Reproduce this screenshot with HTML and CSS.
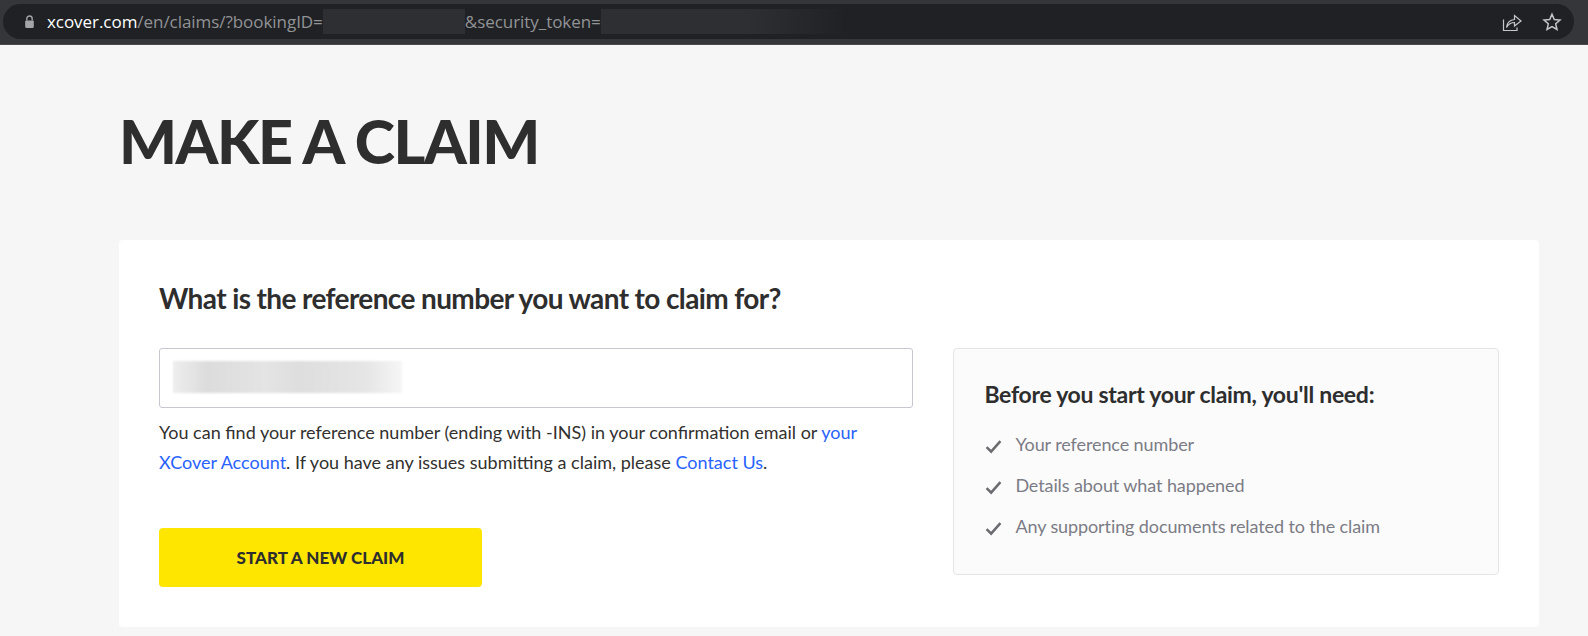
FILE: index.html
```html
<!DOCTYPE html>
<html lang="en">
<head>
    <meta charset="UTF-8">
    <title>Make a claim</title>
    <link rel="stylesheet" href="styles.css">
</head>
<body>
    <div class="toolbar">
        <div class="address-bar">
            <svg class="lock" width="11" height="14" viewBox="0 0 10 13"><path d="M2.500 5V3.400a2.500 2.500 0 0 1 5 0V5" fill="none" stroke="#a3a5a8" stroke-width="1.300"/><rect x="1" y="5" width="8" height="7" rx="1" fill="#a3a5a8"/></svg>
            <div class="url">
                <span class="host">xcover.com</span>/en/claims/?bookingID=<span class="redacted redacted-id"></span>&amp;security_token=<span class="redacted redacted-token"></span>
            </div>
            <div class="bar-icons">
                <svg width="20" height="20" viewBox="0 0 20 20" fill="none" stroke="#c4c6c9" stroke-width="1.200"><path d="M1.500 7.500V18.500H15V15.500"/><path d="M4.500 15.500C5 10.500 8 8 12.500 7.500V3.500L19 9L12.500 14V10.500C9.500 10.500 6.500 12 4.500 15.500Z"/></svg>
                <svg width="20" height="20" viewBox="0 0 20 20" fill="none" stroke="#c4c6c9" stroke-width="1.500"><path d="M10 2.200L12.300 7.500L18 8L13.700 11.800L15 17.500L10 14.500L5 17.500L6.300 11.800L2 8L7.700 7.500Z"/></svg>
            </div>
        </div>
    </div>

    <div class="page">
        <h1>MAKE A CLAIM</h1>

        <div class="card">
            <h2>What is the reference number you want to claim for?</h2>
            <div class="columns">
                <div class="form-col">
                    <div class="ref-input"><span class="ref-value"></span></div>
                    <p class="hint">You can find your reference number (ending with -INS) in your confirmation email or <a href="#">your</a> <a href="#">XCover Account</a>. If you have any issues submitting a claim, please <a href="#">Contact Us</a>.</p>
                    <button class="start-btn">START A NEW CLAIM</button>
                </div>
                <div class="needs">
                    <h3>Before you start your claim, you'll need:</h3>
                    <ul>
                        <li><svg class="check" width="17" height="15" viewBox="0 0 16 14"><path d="M1.500 7.500L5.800 11.800L14.500 2" fill="none" stroke="#6b6c70" stroke-width="2.400"/></svg>Your reference number</li>
                        <li><svg class="check" width="17" height="15" viewBox="0 0 16 14"><path d="M1.500 7.500L5.800 11.800L14.500 2" fill="none" stroke="#6b6c70" stroke-width="2.400"/></svg>Details about what happened</li>
                        <li><svg class="check" width="17" height="15" viewBox="0 0 16 14"><path d="M1.500 7.500L5.800 11.800L14.500 2" fill="none" stroke="#6b6c70" stroke-width="2.400"/></svg>Any supporting documents related to the claim</li>
                    </ul>
                </div>
            </div>
        </div>
    </div>
</body>
</html>
```

FILE: styles.css
```css
* { margin: 0; padding: 0; box-sizing: border-box; }
html, body { height: 100%; overflow: hidden; }
body {
    font-family: Lato, "Open Sans", sans-serif;
    background: #f6f6f6;
    color: #2e2e2e;
}
.toolbar {
    height: 45px;
    background: #35363a;
    padding: 4px 14px 5px 3px;
    border-bottom: 1px solid #4a4b4e;
}
.address-bar {
    height: 35px;
    background: #202124;
    border-radius: 18px;
    display: flex;
    align-items: center;
    padding: 0 12px 0 21px;
}
.lock { flex: none; margin-right: 12px; }
.url {
    font-family: "Open Sans", sans-serif;
    font-size: 17px;
    letter-spacing: -0.05px;
    color: #919396;
    display: flex;
    align-items: center;
    white-space: pre;
    flex: 1;
}
.host { color: #fff; }
.redacted { display: block; height: 25px; }
.redacted-id { width: 142px; background: #2e2f32; }
.redacted-token { width: 245px; background: linear-gradient(90deg, #2e2f32 60%, #202124); }
.bar-icons { display: flex; gap: 20px; }

.page { padding: 0 49px 0 119px; }
h1 {
    font-size: 61px;
    font-weight: 900;
    letter-spacing: -1.450px;
    line-height: 60px;
    padding-top: 66px;
    height: 195px;
    color: #2e2e2e;
}
.card {
    background: #fff;
    border-radius: 4px;
    padding: 40px;
    height: 387px;
}
h2 {
    font-size: 28px;
    font-weight: 700;
    letter-spacing: -0.620px;
    line-height: 36px;
    margin-bottom: 32px;
}
.columns { display: flex; gap: 40px; }
.form-col { width: 755px; }
.ref-input {
    height: 60px;
    border: 1px solid #c6c8cf;
    border-radius: 3px;
    padding: 12px 13px;
}
.ref-value {
    display: block;
    width: 229px;
    height: 32px;
    background: linear-gradient(90deg, #eee, #dcdcdc 15%, #e4e4e4 40%, #dedede 55%, #e6e6e6 85%, #f6f6f6);
    filter: blur(1px);
}
.hint {
    font-size: 18px;
    line-height: 30px;
    margin-top: 9px;
    color: #33312f;
}
.hint a { color: #2962ff; text-decoration: none; }
.start-btn {
    display: block;
    width: 323px;
    height: 59px;
    margin-top: 51px;
    background: #ffe600;
    border: none;
    border-radius: 4px;
    font-family: Lato, sans-serif;
    font-size: 17px;
    font-weight: 900;
    color: #2e2e2e;
}
.needs {
    width: 546px;
    height: 227px;
    background: #fbfbfc;
    border: 1px solid #e4e5e8;
    border-radius: 4px;
    padding: 30px 30px;
}
h3 {
    font-size: 23px;
    font-weight: 700;
    letter-spacing: -0.290px;
    line-height: 30px;
    margin-bottom: 15px;
}
.needs ul { list-style: none; }
.needs li {
    display: flex;
    align-items: center;
    gap: 13px;
    font-size: 18px;
    letter-spacing: -0.100px;
    line-height: 41px;
    color: #7b7c85;
}
.check { flex: none; margin: 3px 0 0 1px; }
```
